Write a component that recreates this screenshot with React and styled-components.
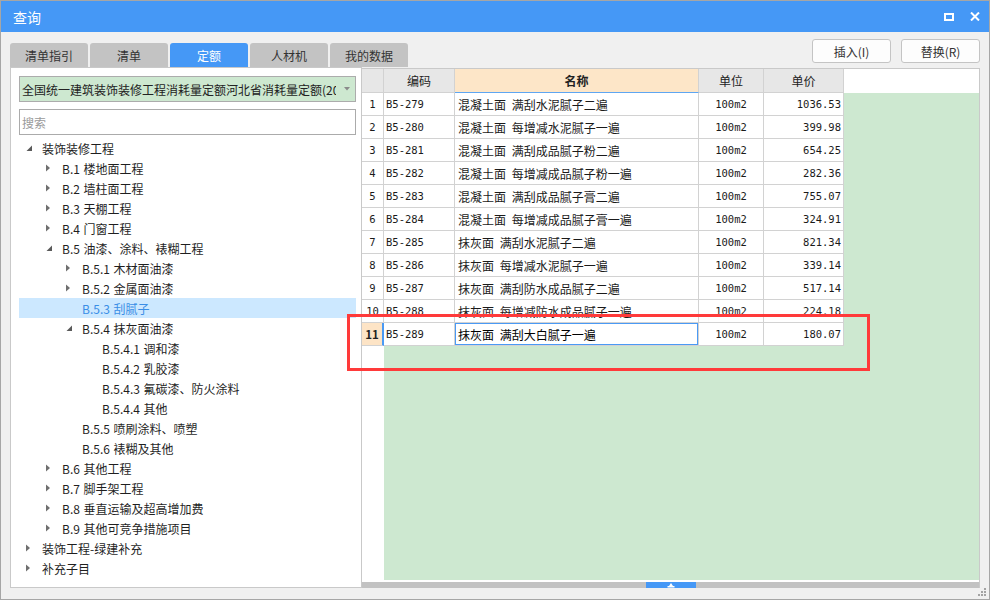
import React from 'react';
import styled, { createGlobalStyle, css } from 'styled-components';

const CJK = `"Noto Sans CJK SC", "Noto Sans", sans-serif`;
const MONO = `"DejaVu Sans Mono", "Liberation Mono", monospace`;

const GlobalStyle = createGlobalStyle`
  html, body { margin: 0; padding: 0; width: 990px; height: 600px; overflow: hidden; background: #ffffff; }
  * { box-sizing: border-box; }
  body { font-family: ${CJK}; }
`;

const Window = styled.div`
  position: relative;
  width: 990px;
  height: 600px;
  border: 1px solid #a6a6a6;
  background: #f0f0f0;
  display: flex;
  flex-direction: column;
  font-family: ${CJK};
`;

const TitleBar = styled.div`
  flex: none;
  height: 31px;
  background: #4598f6;
  display: flex;
  align-items: center;
  justify-content: space-between;
  padding: 0 9px 0 12px;
  color: #ffffff;
`;

const Title = styled.span`
  font-size: 14px;
  line-height: 1;
`;

const TitleControls = styled.div`
  display: flex;
  align-items: center;
  gap: 16px;
`;

const Toolbar = styled.div`
  flex: none;
  height: 35px;
  padding: 7px 9px 0 9px;
  display: flex;
  justify-content: space-between;
  align-items: flex-start;
`;

const Tabs = styled.div`
  align-self: flex-end;
  display: flex;
  gap: 2px;
`;

const Tab = styled.div`
  width: 78px;
  height: 24px;
  border-radius: 3px 3px 0 0;
  display: flex;
  align-items: center;
  justify-content: center;
  font-size: 12px;
  color: #333333;
  background: #c3c3c3;
  ${(p) =>
    p.$active &&
    css`
      background: #4598f6;
      color: #ffffff;
    `}
`;

const Buttons = styled.div`
  display: flex;
  gap: 10px;
`;

const Button = styled.div`
  width: 79px;
  height: 24px;
  border: 1px solid #c4c4c4;
  border-radius: 3px;
  background: #fdfdfd;
  display: flex;
  align-items: center;
  justify-content: center;
  font-size: 12px;
  color: #333333;
`;

const Main = styled.div`
  flex: 1;
  min-height: 0;
  display: flex;
  padding: 0 9px 11px 9px;
`;

const LeftPanel = styled.div`
  flex: none;
  width: 352px;
  border: 1px solid #c9c9c9;
  background: #ffffff;
  padding: 8px 5px 0 8px;
  display: flex;
  flex-direction: column;
`;

const Dropdown = styled.div`
  height: 26px;
  border: 1px solid #acacac;
  background: #cde8d0;
  display: flex;
  align-items: center;
  padding-left: 2px;
`;

const DropText = styled.div`
  flex: 1;
  min-width: 0;
  overflow: hidden;
  white-space: nowrap;
  font-size: 12px;
  color: #222222;
`;

const DropArrow = styled.div`
  flex: none;
  width: 19px;
  display: flex;
  justify-content: center;
  padding-left: 2px;
`;

const Search = styled.input`
  margin-top: 7px;
  height: 26px;
  border: 1px solid #ababab;
  outline: none;
  padding: 0 2px;
  font-family: ${CJK};
  font-size: 12px;
  color: #333333;
  &::placeholder { color: #9a9a9a; }
`;

const Tree = styled.div`
  margin-top: 3px;
  display: flex;
  flex-direction: column;
`;

const TreeRow = styled.div`
  height: 20px;
  display: flex;
  align-items: center;
  padding-left: ${(p) => 3 + p.$level * 20}px;
  font-size: 12px;
  color: #1f1f1f;
  white-space: nowrap;
  word-spacing: 1px;
  ${(p) =>
    p.$selected &&
    css`
      background: #cce8ff;
      color: #3a8ee6;
    `}
`;

const Toggle = styled.span`
  flex: none;
  width: 20px;
  height: 20px;
  display: flex;
  align-items: center;
  padding-left: 4px;
`;

const RightPanel = styled.div`
  flex: 1;
  min-width: 0;
  margin-top: 1px;
  border-top: 1px solid #c9c9c9;
  border-right: 1px solid #c9c9c9;
  background: #ffffff;
  display: flex;
  flex-direction: column;
`;

const HeaderRow = styled.div`
  flex: none;
  display: flex;
  height: 24px;
  background: #ffffff;
`;

const GridBody = styled.div`
  flex: 1;
  min-height: 0;
  display: flex;
  flex-direction: column;
  background: linear-gradient(to right, #ffffff 22px, #cde8d0 22px);
`;

const DataRow = styled.div`
  flex: none;
  display: flex;
  height: 23px;
`;

const Cell = styled.div`
  position: relative;
  flex: none;
  width: ${(p) => p.$w}px;
  height: 100%;
  border-right: 1px solid #d2d2d2;
  border-bottom: 1px solid #d2d2d2;
  background: #ffffff;
  display: flex;
  align-items: center;
  justify-content: ${(p) => (p.$align === 'right' ? 'flex-end' : p.$align === 'center' ? 'center' : 'flex-start')};
  padding: 0 ${(p) => (p.$align === 'right' ? 2 : 0)}px 0 ${(p) => (p.$align === 'left' ? p.$pl || 2 : 0)}px;
  font-size: 12px;
  color: #1a1a1a;
  white-space: nowrap;
  overflow: hidden;
  ${(p) => p.$mono && css`font-family: ${MONO}; font-size: 10.5px;`}
  ${(p) => p.$wide && css`word-spacing: 3px;`}
`;

const HeadCell = styled(Cell)`
  background: #e7e7e7;
  color: #222222;
  ${(p) =>
    p.$hot &&
    css`
      background: #fde6c8;
      border-bottom-color: #5ea6f2;
      font-weight: bold;
    `}
`;

const RowNumCell = styled(Cell)`
  ${(p) =>
    p.$current &&
    css`
      background: #fde4c6;
      border-right: 2px solid #4a9af5;
      font-weight: bold;
      color: #222222;
      font-size: 11.5px;
    `}
`;

const EditCell = styled(Cell)`
  color: #000000;
  &::after {
    content: '';
    position: absolute;
    top: -1px;
    left: -1px;
    right: -1px;
    bottom: -1px;
    border: 2px solid #4a9af5;
  }
`;

const ScrollGap = styled.div`
  flex: none;
  height: 2px;
  background: #ffffff;
`;

const ScrollTrack = styled.div`
  flex: none;
  height: 6px;
  background: #c2c2c2;
  display: flex;
  justify-content: center;
`;

const ScrollThumb = styled.div`
  width: 50px;
  height: 6px;
  background: #4598f6;
  display: flex;
  align-items: center;
  justify-content: center;
`;

const Annotation = styled.div`
  position: absolute;
  left: 346px;
  top: 313px;
  width: 523px;
  height: 57px;
  border: 3px solid #ff3a3a;
  pointer-events: none;
`;

const Grip = styled.svg`
  position: absolute;
  right: 2px;
  bottom: 2px;
`;

const CollapsedArrow = () => (
  <svg width="5" height="8" viewBox="0 0 5 8">
    <polygon points="0,0.5 4,4 0,7.5" fill="#6f6f6f" />
  </svg>
);

const ExpandedArrow = () => (
  <svg width="7" height="7" viewBox="0 0 7 7">
    <polygon points="6,0.5 6,6 0.5,6" fill="#5a5a5a" />
  </svg>
);

const treeItems = [
  { level: 0, state: 'open', text: '装饰装修工程' },
  { level: 1, state: 'closed', text: 'B.1 楼地面工程' },
  { level: 1, state: 'closed', text: 'B.2 墙柱面工程' },
  { level: 1, state: 'closed', text: 'B.3 天棚工程' },
  { level: 1, state: 'closed', text: 'B.4 门窗工程' },
  { level: 1, state: 'open', text: 'B.5 油漆、涂料、裱糊工程' },
  { level: 2, state: 'closed', text: 'B.5.1 木材面油漆' },
  { level: 2, state: 'closed', text: 'B.5.2 金属面油漆' },
  { level: 2, state: 'leaf', text: 'B.5.3 刮腻子', selected: true },
  { level: 2, state: 'open', text: 'B.5.4 抹灰面油漆' },
  { level: 3, state: 'leaf', text: 'B.5.4.1 调和漆' },
  { level: 3, state: 'leaf', text: 'B.5.4.2 乳胶漆' },
  { level: 3, state: 'leaf', text: 'B.5.4.3 氟碳漆、防火涂料' },
  { level: 3, state: 'leaf', text: 'B.5.4.4 其他' },
  { level: 2, state: 'leaf', text: 'B.5.5 喷刷涂料、喷塑' },
  { level: 2, state: 'leaf', text: 'B.5.6 裱糊及其他' },
  { level: 1, state: 'closed', text: 'B.6 其他工程' },
  { level: 1, state: 'closed', text: 'B.7 脚手架工程' },
  { level: 1, state: 'closed', text: 'B.8 垂直运输及超高增加费' },
  { level: 1, state: 'closed', text: 'B.9 其他可竞争措施项目' },
  { level: 0, state: 'closed', text: '装饰工程-绿建补充' },
  { level: 0, state: 'closed', text: '补充子目' },
];

const rows = [
  ['B5-279', '混凝土面 满刮水泥腻子二遍', '1036.53'],
  ['B5-280', '混凝土面 每增减水泥腻子一遍', '399.98'],
  ['B5-281', '混凝土面 满刮成品腻子粉二遍', '654.25'],
  ['B5-282', '混凝土面 每增减成品腻子粉一遍', '282.36'],
  ['B5-283', '混凝土面 满刮成品腻子膏二遍', '755.07'],
  ['B5-284', '混凝土面 每增减成品腻子膏一遍', '324.91'],
  ['B5-285', '抹灰面 满刮水泥腻子二遍', '821.34'],
  ['B5-286', '抹灰面 每增减水泥腻子一遍', '339.14'],
  ['B5-287', '抹灰面 满刮防水成品腻子二遍', '517.14'],
  ['B5-288', '抹灰面 每增减防水成品腻子一遍', '224.18'],
  ['B5-289', '抹灰面 满刮大白腻子一遍', '180.07'],
];

const W = { num: 22, code: 71, name: 244, unit: 65, price: 80 };

const tabs = ['清单指引', '清单', '定额', '人材机', '我的数据'];

export default function App() {
  return (
    <>
      <GlobalStyle />
      <Window>
        <TitleBar>
          <Title>查询</Title>
          <TitleControls>
            <svg width="10" height="8" viewBox="0 0 10 8">
              <rect x="1" y="1" width="8" height="6" fill="none" stroke="#fff" strokeWidth="2" />
            </svg>
            <svg width="10" height="9" viewBox="0 0 10 9">
              <path d="M1 0.5 L9 8.5 M9 0.5 L1 8.5" stroke="#fff" strokeWidth="2" />
            </svg>
          </TitleControls>
        </TitleBar>

        <Toolbar>
          <Tabs>
            {tabs.map((t) => (
              <Tab key={t} $active={t === '定额'}>
                {t}
              </Tab>
            ))}
          </Tabs>
          <Buttons>
            <Button>插入(I)</Button>
            <Button>替换(R)</Button>
          </Buttons>
        </Toolbar>

        <Main>
          <LeftPanel>
            <Dropdown>
              <DropText>全国统一建筑装饰装修工程消耗量定额河北省消耗量定额(2012)</DropText>
              <DropArrow>
                <svg width="6" height="4" viewBox="0 0 6 4">
                  <polygon points="0,0 6,0 3,3.5" fill="#8a8a8a" />
                </svg>
              </DropArrow>
            </Dropdown>
            <Search placeholder="搜索" readOnly />
            <Tree>
              {treeItems.map((it, i) => (
                <TreeRow key={i} $level={it.level} $selected={it.selected}>
                  <Toggle>
                    {it.state === 'closed' && <CollapsedArrow />}
                    {it.state === 'open' && <ExpandedArrow />}
                  </Toggle>
                  {it.text}
                </TreeRow>
              ))}
            </Tree>
          </LeftPanel>

          <RightPanel>
            <HeaderRow>
              <HeadCell $w={W.num} $align="center" />
              <HeadCell $w={W.code} $align="center">编码</HeadCell>
              <HeadCell $w={W.name} $align="center" $hot>名称</HeadCell>
              <HeadCell $w={W.unit} $align="center">单位</HeadCell>
              <HeadCell $w={W.price} $align="center">单价</HeadCell>
            </HeaderRow>
            <GridBody>
              {rows.map((r, i) => {
                const current = i === rows.length - 1;
                const NameCell = current ? EditCell : Cell;
                return (
                  <DataRow key={r[0]}>
                    <RowNumCell $w={W.num} $align="center" $mono={!current} $current={current}>
                      {i + 1}
                    </RowNumCell>
                    <Cell $w={W.code} $align="left" $pl={2} $mono>
                      {r[0]}
                    </Cell>
                    <NameCell $w={W.name} $align="left" $pl={3} $wide>
                      {r[1]}
                    </NameCell>
                    <Cell $w={W.unit} $align="center" $mono>
                      100m2
                    </Cell>
                    <Cell $w={W.price} $align="right" $mono>
                      {r[2]}
                    </Cell>
                  </DataRow>
                );
              })}
            </GridBody>
            <ScrollGap />
            <ScrollTrack>
              <ScrollThumb>
                <svg width="8" height="5" viewBox="0 0 8 5">
                  <polygon points="4,0 6,3 2,3" fill="#fff" />
                  <rect x="0.5" y="3" width="7" height="1.5" fill="#fff" />
                </svg>
              </ScrollThumb>
            </ScrollTrack>
          </RightPanel>
        </Main>

        <Annotation />
        <Grip width="9" height="9" viewBox="0 0 9 9">
          <rect x="6" y="0" width="2" height="2" fill="#a3a3a3" />
          <rect x="3" y="3" width="2" height="2" fill="#a3a3a3" />
          <rect x="6" y="3" width="2" height="2" fill="#a3a3a3" />
          <rect x="0" y="6" width="2" height="2" fill="#a3a3a3" />
          <rect x="3" y="6" width="2" height="2" fill="#a3a3a3" />
          <rect x="6" y="6" width="2" height="2" fill="#a3a3a3" />
        </Grip>
      </Window>
    </>
  );
}
